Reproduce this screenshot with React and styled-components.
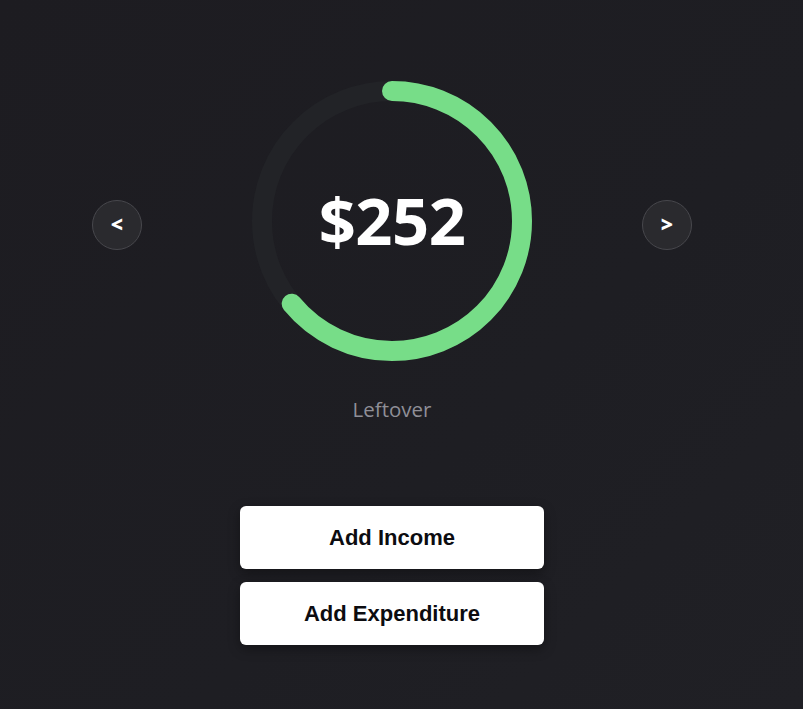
import React from 'react'
import styled, { createGlobalStyle } from 'styled-components'

const GlobalStyle = createGlobalStyle`
  html, body {
    margin: 0;
    padding: 0;
    height: 100%;
  }
  body {
    background: linear-gradient(135deg, #1d1c21 0%, #1e1e23 60%, #202025 100%);
    font-family: "Open Sans", "Noto Sans", sans-serif;
  }
`

const Page = styled.div`
  width: 784px;
  min-height: 709px;
  display: flex;
  flex-direction: column;
  align-items: center;
  padding-top: 81px;
  box-sizing: border-box;
`

const Carousel = styled.div`
  display: flex;
  align-items: center;
  gap: 110px;
`

const ArrowButton = styled.button`
  width: 50px;
  height: 50px;
  margin-top: 8px;
  border-radius: 50%;
  border: 1px solid #47474c;
  background: #2a2a2e;
  color: #ffffff;
  font-family: "Open Sans", sans-serif;
  font-weight: 800;
  font-size: 21px;
  display: flex;
  align-items: center;
  justify-content: center;
  padding: 0 0 3px;
  cursor: pointer;
`

const Gauge = styled.div`
  position: relative;
  width: 280px;
  height: 280px;
`

const Amount = styled.div`
  position: absolute;
  inset: 0;
  display: flex;
  align-items: center;
  justify-content: center;
  color: #ffffff;
  font-family: "Open Sans", sans-serif;
  font-weight: 700;
  font-size: 65px;
  letter-spacing: -0.5px;
  padding-bottom: 2px;
`

const Label = styled.div`
  margin-top: 34px;
  color: #8f8f97;
  font-size: 20.5px;
  line-height: 28px;
`

const Actions = styled.div`
  margin-top: 83px;
  display: flex;
  flex-direction: column;
  gap: 13px;
`

const ActionButton = styled.button`
  width: 304px;
  height: 63px;
  border: none;
  border-radius: 6px;
  background: #ffffff;
  color: #0c0c10;
  font-family: "Liberation Sans", Arial, sans-serif;
  font-weight: 700;
  font-size: 22px;
  padding-top: 2px;
  box-shadow: 0 4px 12px rgba(0, 0, 0, 0.35);
  cursor: pointer;
`

const Ring = ({ value }) => {
  const r = 130
  const c = 2 * Math.PI * r
  return (
    <svg width="280" height="280" viewBox="0 0 280 280">
      <circle cx="140" cy="140" r={r} fill="none" stroke="#222327" strokeWidth="20" />
      <circle
        cx="140"
        cy="140"
        r={r}
        fill="none"
        stroke="#77dd88"
        strokeWidth="20"
        strokeLinecap="round"
        strokeDasharray={`${c * value} ${c}`}
        transform="rotate(-90 140 140)"
      />
    </svg>
  )
}

export default function App() {
  return (
    <>
      <GlobalStyle />
      <Page>
        <Carousel>
          <ArrowButton>&lt;</ArrowButton>
          <Gauge>
            <Ring value={0.64} />
            <Amount>$252</Amount>
          </Gauge>
          <ArrowButton>&gt;</ArrowButton>
        </Carousel>
        <Label>Leftover</Label>
        <Actions>
          <ActionButton>Add Income</ActionButton>
          <ActionButton>Add Expenditure</ActionButton>
        </Actions>
      </Page>
    </>
  )
}
